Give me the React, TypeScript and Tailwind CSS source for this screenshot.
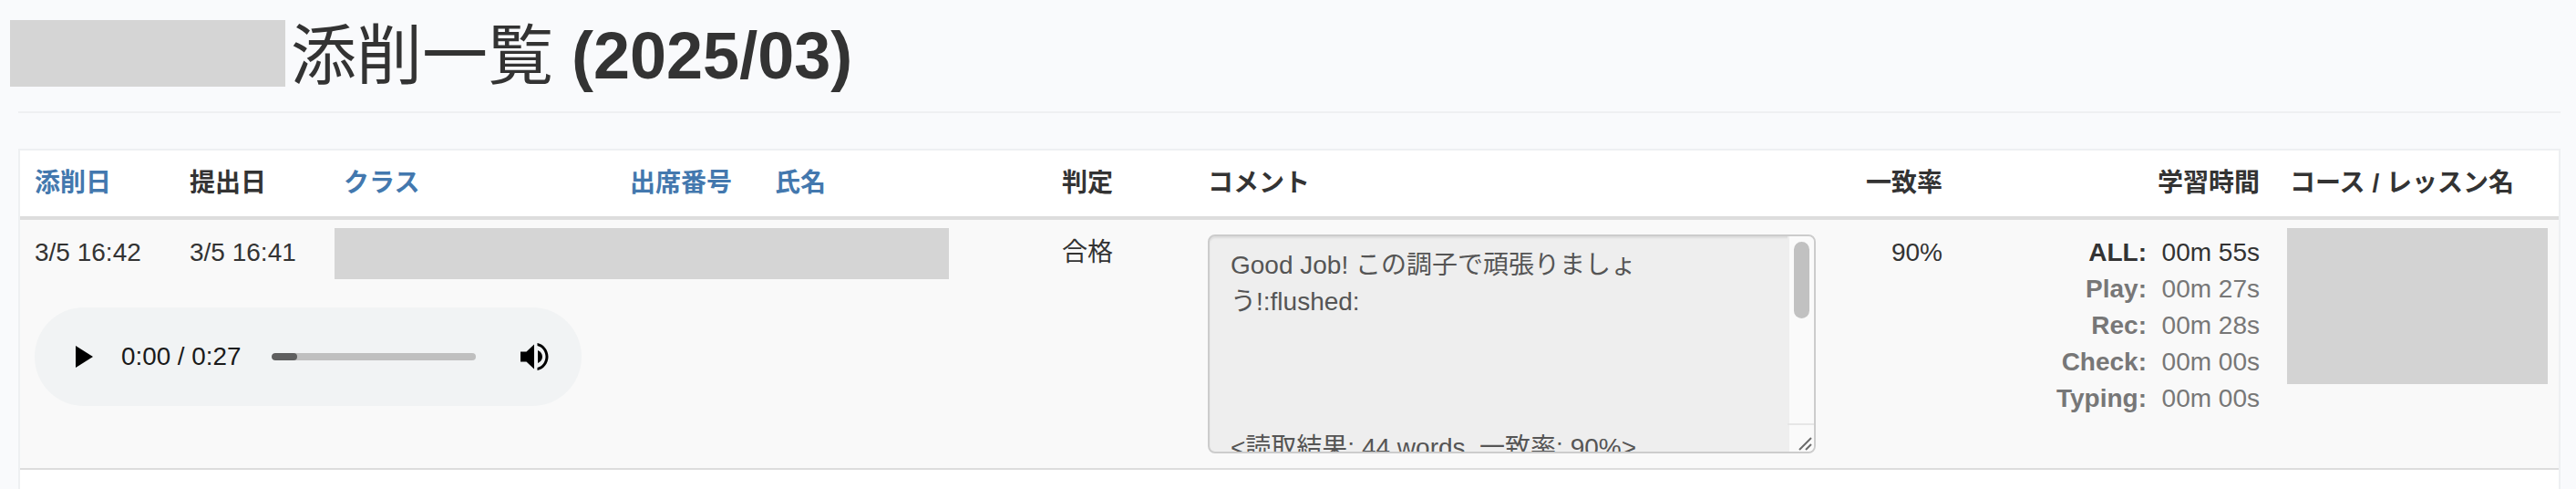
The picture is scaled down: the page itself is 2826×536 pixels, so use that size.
import React from "react";

const FONT = "font-['Liberation_Sans','Noto_Sans_CJK_JP',sans-serif]";

const times: [string, string][] = [
  ["ALL:", "00m 55s"],
  ["Play:", "00m 27s"],
  ["Rec:", "00m 28s"],
  ["Check:", "00m 00s"],
  ["Typing:", "00m 00s"],
];

const comment =
  "Good Job! この調子で頑張りましょ\nう!:flushed:\n\n\n\n<読取結果: 44 words, 一致率: 90%>\n";

function AudioBar() {
  return (
    <div className="flex h-[108px] w-[600px] items-center rounded-[54px] bg-[#f1f3f4] text-[28px] text-[#1a1a1a]">
      <svg className="ml-[45px] h-[24px] w-[19px] shrink-0" viewBox="0 0 19 24">
        <polygon points="0,0 19,12 0,24" fill="#000" />
      </svg>
      <span className="ml-[31px] w-[132px] whitespace-nowrap text-[27.8px]">0:00 / 0:27</span>
      <div className="ml-[33px] h-[8px] w-[224px] overflow-hidden rounded-[4px] bg-[#bfbfbf]">
        <div className="h-full w-[28px] rounded-[4px] bg-[#5f5f5f]" />
      </div>
      <svg className="ml-[49px] h-[30px] w-[31px] shrink-0" viewBox="0 0 31 30">
        <path d="M0 9.5h6.5L15 1.5v27l-8.5-8H0z" fill="#000" />
        <path d="M19 8c3 1.2 5 4 5 7s-2 5.800-5 7z" fill="#000" />
        <path d="M18.500 0c6.800 1.300 12 7.600 12 15s-5.200 13.700-12 15v-3c5.200-1.300 9-6.300 9-12s-3.800-10.700-9-12z" fill="#000" />
      </svg>
    </div>
  );
}

function Comment() {
  return (
    <div className="relative h-[240px] w-[667px]">
      <textarea
        readOnly
        value={comment}
        className="block h-full w-full resize-none overflow-hidden whitespace-pre-wrap rounded-[8px] border-2 border-[#ccc] bg-[#eee] py-[12px] pl-[23px] pr-[40px] text-[28px] leading-[40px] text-[#555] shadow-[inset_0_2px_2px_rgba(0,0,0,0.075)] outline-none"
      />
      <div className="absolute bottom-[2px] right-[2px] top-[2px] w-[29px] rounded-r-[6px] border-l-2 border-[#eee] bg-[#fafafa]">
        <div className="ml-[5px] mt-[6px] h-[84px] w-[17px] rounded-[9px] bg-[#c1c1c1]" />
        <div className="absolute bottom-0 left-[-2px] right-0 h-[31px] border-t-2 border-[#e6e6e6]">
          <svg className="absolute bottom-0 right-0 h-[20px] w-[20px]" viewBox="0 0 20 20">
            <path d="M4 18L17 5M11 18L17 12" stroke="#6b6b6b" strokeWidth="2" fill="none" />
          </svg>
        </div>
      </div>
    </div>
  );
}

export default function App() {
  const th = "h-[76px] border-b-4 border-[#ddd] px-[16px] text-left align-middle text-[28px] font-bold leading-[40px]";
  const td = "px-[16px] pt-[16px] align-top leading-[40px]";
  const rowEnd = "border-b-2 border-[#ddd]";
  return (
    <div className={`flex h-[536px] flex-col overflow-hidden bg-[#f9fafc] pl-[20px] pr-[17px] text-[28px] text-[#333] ${FONT}`}>
      <h1 className="ml-[-9px] mt-[22px] flex h-[73px] shrink-0 items-center text-[72px] font-normal leading-[73px] text-[#333]">
        <div className="h-[73px] w-[302px] shrink-0 bg-[#d5d5d5]" />
        <span className="ml-[6px] mt-[6px] whitespace-nowrap">
          添削一覧 <span className="font-bold">(2025/03)</span>
        </span>
      </h1>
      <div className="mt-[27px] h-[2px] shrink-0 bg-[#eff0f2]" />
      <div className="mt-[39px] min-h-0 flex-1 border-x-2 border-t-2 border-[#eef0f2] bg-white">
        <table className="w-full table-fixed border-separate border-spacing-0">
          <colgroup>
            <col className="w-[170px]" />
            <col className="w-[169px]" />
            <col className="w-[314px]" />
            <col className="w-[159px]" />
            <col className="w-[315px]" />
            <col className="w-[160px]" />
            <col className="w-[697px]" />
            <col className="w-[141px]" />
            <col className="w-[349px]" />
            <col />
          </colgroup>
          <thead>
            <tr>
              <th className={`${th} text-[#4378ae]`}>添削日</th>
              <th className={th}>提出日</th>
              <th className={`${th} text-[#4378ae]`}>クラス</th>
              <th className={`${th} text-[#4378ae]`}>出席番号</th>
              <th className={`${th} text-[#4378ae]`}>氏名</th>
              <th className={th}>判定</th>
              <th className={th}>コメント</th>
              <th className={`${th} !text-right`}>一致率</th>
              <th className={`${th} !pr-[17px] !text-right`}>学習時間</th>
              <th className={`${th} whitespace-nowrap`}>コース / レッスン名</th>
            </tr>
          </thead>
          <tbody className="bg-[#f9f9f9]">
            <tr className="h-[96px]">
              <td className={td}>3/5 16:42</td>
              <td className={td}>3/5 16:41</td>
              <td colSpan={3} className="pl-[6px] pt-[9px] align-top">
                <div className="h-[56px] w-[674px] bg-[#d5d5d5]" />
              </td>
              <td rowSpan={2} className={`${td} ${rowEnd}`}>合格</td>
              <td rowSpan={2} className={`${td} ${rowEnd}`}>
                <Comment />
              </td>
              <td rowSpan={2} className={`${td} ${rowEnd} text-right`}>90%</td>
              <td rowSpan={2} className={`${td} ${rowEnd} !pr-[17px]`}>
                <dl className="grid grid-cols-[1fr_108px] gap-x-[16px] text-right">
                  {times.map(([k, v], i) => (
                    <React.Fragment key={k}>
                      <dt className={`font-bold ${i === 0 ? "text-[#333]" : "text-[#777]"}`}>{k}</dt>
                      <dd className={`whitespace-nowrap ${i === 0 ? "text-[#333]" : "text-[#777]"}`}>{v}</dd>
                    </React.Fragment>
                  ))}
                </dl>
              </td>
              <td rowSpan={2} className={`pl-[13px] pt-[9px] align-top ${rowEnd}`}>
                <div className="h-[171px] w-[286px] bg-[#d3d3d3]" />
              </td>
            </tr>
            <tr className="h-[178px]">
              <td colSpan={5} className={`px-[16px] align-top ${rowEnd}`}>
                <AudioBar />
              </td>
            </tr>
          </tbody>
        </table>
      </div>
    </div>
  );
}
